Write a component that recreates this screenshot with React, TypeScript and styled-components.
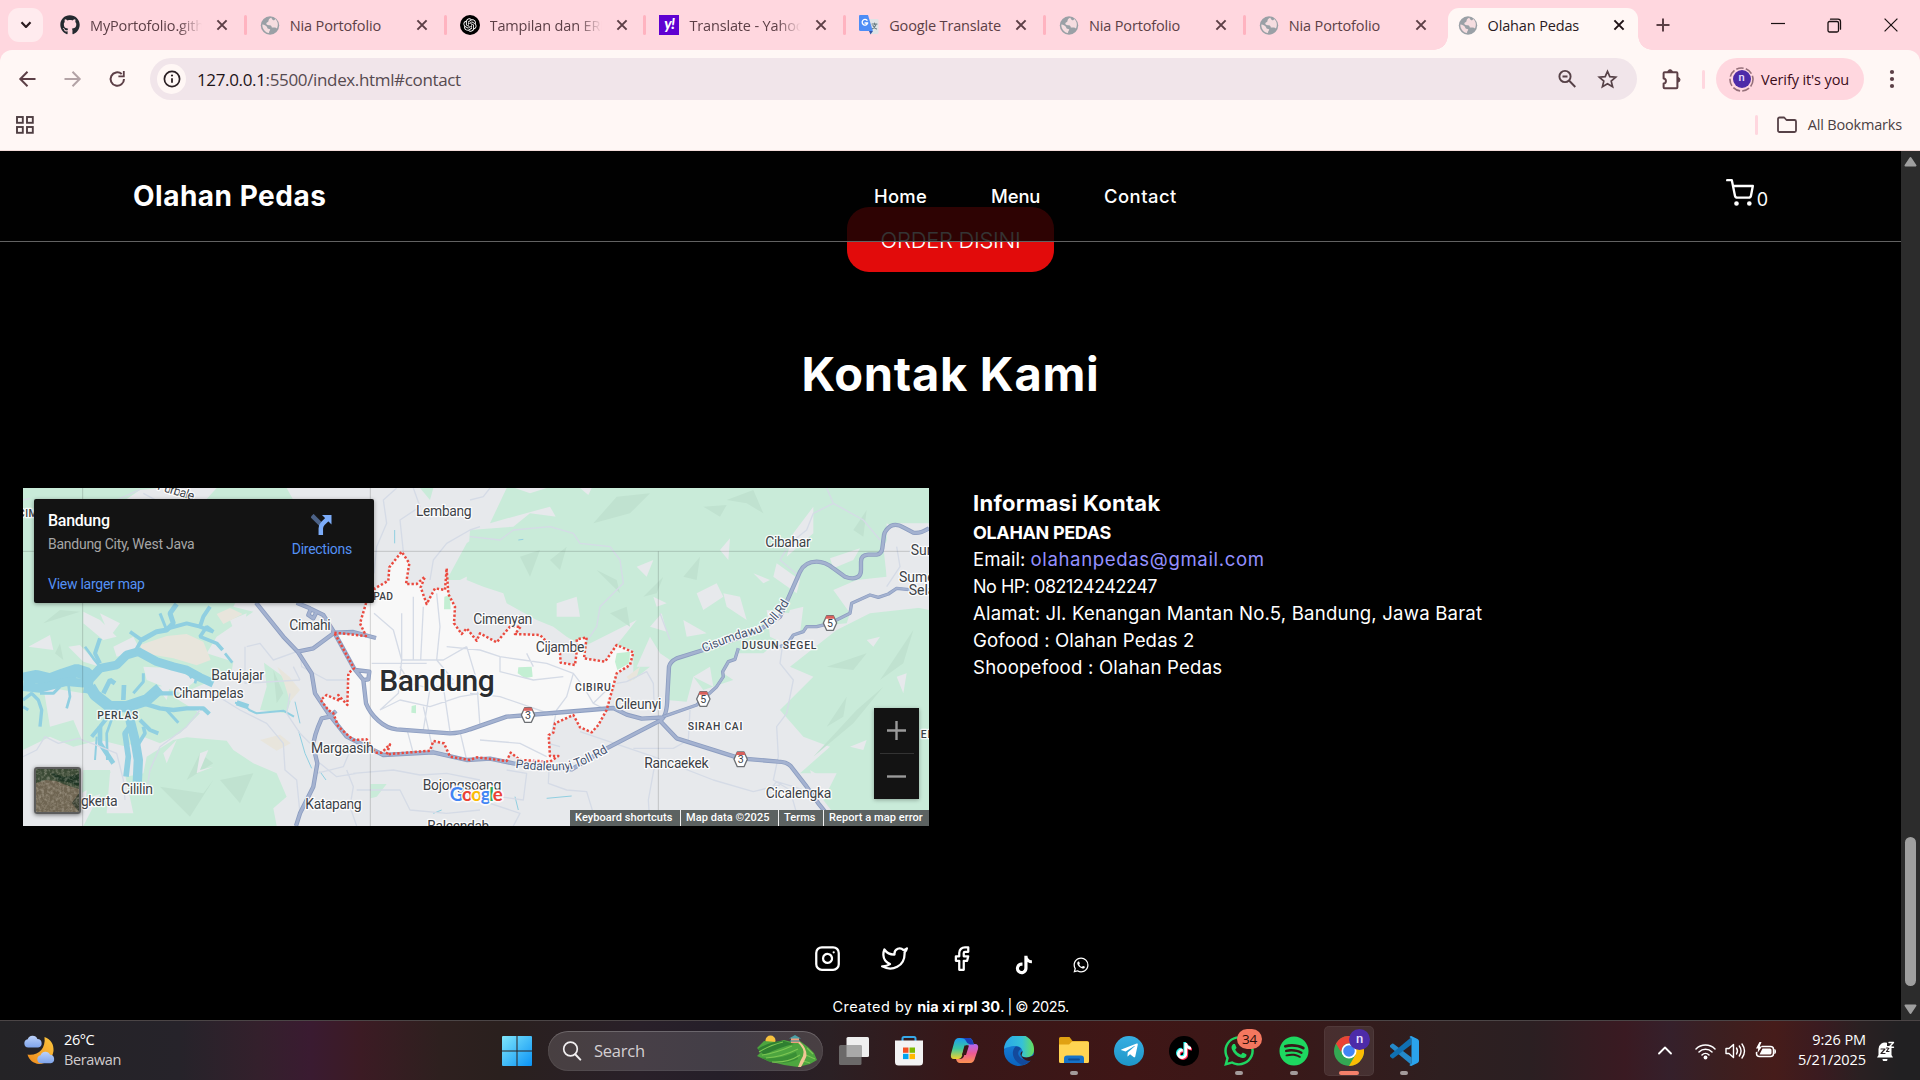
import React from 'react';
import styled, { createGlobalStyle } from 'styled-components';
import { FaGithub, FaSpotify, FaTelegramPlane, FaTiktok, FaWhatsapp } from 'react-icons/fa';
import { RiOpenaiFill } from 'react-icons/ri';
import { BiLogoTiktok, BiLogoWhatsapp } from 'react-icons/bi';

const ui = '"Open Sans", "Noto Sans", sans-serif';
const pop = 'Inter, "Noto Sans", sans-serif';
const map = 'Roboto, "Liberation Sans", sans-serif';

const Global = createGlobalStyle`
  * { box-sizing: border-box; }
  body { margin: 0; background: #000; overflow: hidden; }
  p, h1, h2, h3 { margin: 0; }
  svg { display: block; flex: none; }
`;

const Screen = styled.div`
  width: 1920px;
  height: 1080px;
  display: flex;
  flex-direction: column;
  overflow: hidden;
  background: #000;
`;

/* ---------- browser chrome ---------- */

const TabStrip = styled.div`
  height: 50px;
  flex: none;
  display: flex;
  background: #ffd7df;
  font-family: ${ui};
`;

const TabSearch = styled.div`
  width: 35px;
  height: 34px;
  margin: 8px 4px 0 8px;
  border-radius: 11px;
  background: #ffebee;
  display: flex;
  align-items: center;
  justify-content: center;
`;

const Tab = styled.div<{ $active?: boolean }>`
  position: relative;
  width: ${p => (p.$active ? 190 : 199.8)}px;
  margin: ${p => (p.$active ? '8px 0 0 2px' : '0')};
  padding: ${p => (p.$active ? '0 0 8px 10px' : '0 0 0 13px')};
  height: ${p => (p.$active ? 42 : 50)}px;
  border-radius: 11px 11px 0 0;
  background: ${p => (p.$active ? '#fff7f5' : 'transparent')};
  color: ${p => (p.$active ? '#2a1a1e' : '#5c3f46')};
  display: flex;
  align-items: center;
  &::before, &::after {
    content: '';
    display: ${p => (p.$active ? 'block' : 'none')};
    position: absolute;
    bottom: 0;
    width: 14px;
    height: 14px;
  }
  &::before { left: -14px; background: radial-gradient(circle at 0 0, transparent 13.5px, #fff7f5 14px); }
  &::after { right: -14px; background: radial-gradient(circle at 100% 0, transparent 13.5px, #fff7f5 14px); }
`;

const Favicon = styled.span`
  width: 20px;
  margin-right: 10px;
  display: flex;
  color: #24292f;
`;

const TabTitle = styled.span<{ $fade?: boolean }>`
  width: 112px;
  margin-top: 1px;
  font-size: 14.5px;
  letter-spacing: -0.15px;
  line-height: 22px;
  white-space: nowrap;
  overflow: hidden;
  ${p => p.$fade && 'mask-image: linear-gradient(90deg, #000 88px, transparent 112px);'}
`;

const CloseSlot = styled.span<{ $active?: boolean }>`
  margin-left: ${p => (p.$active ? 13 : 14)}px;
`;

const Separator = styled.i<{ $h: number; $c: string; $ml?: number }>`
  width: 3px;
  height: ${p => p.$h}px;
  margin-left: ${p => p.$ml ?? 0}px;
  border-radius: 2px;
  background: ${p => p.$c};
  flex: none;
`;

const TabSep = styled(Separator)`margin-left: auto;`;

const StripEnd = styled.div`
  flex: 1;
  height: 50px;
  padding: 0 22px 0 18px;
  display: flex;
  align-items: center;
`;

const WindowButtons = styled.div`
  margin-left: auto;
  display: flex;
  align-items: center;
  gap: 42px;
`;

const ToolbarWrap = styled.div`
  height: 101px;
  flex: none;
  background: #ffd7df;
  font-family: ${ui};
`;

const ChromePanel = styled.div`
  height: 101px;
  border-radius: 12px 12px 0 0;
  background: #fff7f5;
  border-bottom: 1px solid #f3dcd9;
`;

const Toolbar = styled.div`
  height: 58px;
  display: flex;
  align-items: center;
  padding: 0 18px;
`;

const NavIcons = styled.div`
  width: 132px;
  display: flex;
  gap: 26px;
  align-items: center;
`;

const Omnibox = styled.div`
  width: 1487px;
  height: 42px;
  border-radius: 21px;
  background: #f1e5ea;
  padding: 0 19px 0 7px;
  display: flex;
  align-items: center;
`;

const InfoDot = styled.div`
  width: 29px;
  height: 30px;
  border-radius: 50%;
  background: #fff7f5;
  display: flex;
  align-items: center;
  justify-content: center;
`;

const Url = styled.span`
  margin-left: 11px;
  font-size: 17px;
  letter-spacing: -0.35px;
  color: #564a50;
  b { font-weight: 400; color: #1d1418; }
`;

const OmniActions = styled.div`
  margin-left: auto;
  display: flex;
  align-items: center;
  gap: 20px;
`;

const ToolbarEnd = styled.div`
  flex: 1;
  display: flex;
  align-items: center;
  padding-left: 22px;
`;

const VerifyPill = styled.div`
  width: 148px;
  height: 42px;
  margin: 0 25px 0 11px;
  border-radius: 21px;
  background: #ffd7df;
  display: flex;
  align-items: center;
  padding-left: 13px;
  gap: 7px;
  font-size: 14.5px;
  letter-spacing: -0.12px;
  color: #3c0c1a;
  white-space: nowrap;
  flex: none;
`;

const Avatar = styled.span`
  width: 25px;
  height: 25px;
  border-radius: 50%;
  display: grid;
  place-items: center;
  > * { grid-area: 1 / 1; }
`;

const Initial = styled.span<{ $size: number }>`
  width: ${p => p.$size}px;
  height: ${p => p.$size}px;
  flex: none;
  border-radius: 50%;
  background: #4d2ba8;
  color: #e9e0ff;
  font: 500 ${p => p.$size * 0.62}px/${p => p.$size - 2}px ${map};
  text-align: center;
`;

const Bookmarks = styled.div`
  height: 33px;
  display: flex;
  align-items: center;
  justify-content: space-between;
  padding: 0 18px 0 16px;
  color: #4b3f43;
  font-size: 14.5px;
  letter-spacing: -0.18px;
`;

const AllBookmarks = styled.div`
  display: flex;
  align-items: center;
  i { margin-right: 19px; }
  span { margin-left: 11px; }
`;

/* ---------- page ---------- */

const Viewport = styled.div`
  height: 869px;
  flex: none;
  display: flex;
  background: #000;
`;

const Page = styled.main`
  width: 1901px;
  height: 869px;
  position: relative;
  color: #fff;
  font-family: ${pop};
  display: flex;
  flex-direction: column;
  align-items: center;
`;

const Navbar = styled.header`
  position: absolute;
  inset: 0 0 auto 0;
  height: 91px;
  padding: 0 133px;
  display: grid;
  grid-template-columns: 741px 1fr auto;
  align-items: center;
  background: rgba(1, 1, 1, 0.8);
  border-bottom: 1px solid #626262;
`;

const Logo = styled.h1`
  font-size: 28px;
  line-height: 40px;
  font-weight: 700;
  letter-spacing: 0.5px;
`;

const NavLinks = styled.nav`
  display: flex;
  font-size: 18.4px;
  font-weight: 500;
`;

const NavLink = styled.a<{ $w: number; $ls: number }>`
  width: ${p => p.$w}px;
  letter-spacing: ${p => p.$ls}px;
`;

const Cart = styled.div`
  display: flex;
  align-items: flex-end;
  gap: 3px;
  padding-bottom: 6px;
  font-size: 18px;
  line-height: 15px;
`;

const OrderButton = styled.a`
  margin-top: 56px;
  width: 207px;
  height: 65px;
  flex: none;
  border-radius: 22px;
  background: #e20b0b;
  font-size: 22px;
  font-weight: 300;
  letter-spacing: -0.3px;
  line-height: 67px;
  text-align: center;
`;

const Heading = styled.h2`
  margin-top: 69px;
  font-size: 47px;
  line-height: 66px;
  letter-spacing: 0.75px;
  font-weight: 700;
`;

const ContactRow = styled.section`
  align-self: stretch;
  margin: 81px 0 0 23px;
  display: flex;
  gap: 44px;
`;

const Info = styled.div`
  font-size: 18.6px;
  line-height: 27px;
  white-space: nowrap;
`;

const InfoTitle = styled.h3`
  font-size: 22px;
  line-height: 31px;
  letter-spacing: 0.28px;
  font-weight: 700;
`;

const InfoLine = styled.p<{ $ls: number; $bold?: boolean }>`
  letter-spacing: ${p => p.$ls}px;
  font-weight: ${p => (p.$bold ? 700 : 400)};
  font-size: ${p => (p.$ls < -0.2 ? 18 : 18.6)}px;
  a { color: #9490ff; letter-spacing: 0.63px; }
`;

const Socials = styled.div`
  margin: 119px 0 0 3px;
  height: 30px;
  display: flex;
  align-items: flex-start;
  svg + svg { margin-left: 40px; }
  svg:nth-child(4) { margin: 9px 0 0 38px; }
  svg:nth-child(5) { margin: 10px 0 0 36px; }
`;

const Credit = styled.p`
  margin-top: 21px;
  font-size: 14.5px;
  line-height: 22px;
  letter-spacing: 0.5px;
  white-space: pre;
  b { letter-spacing: 0.05px; }
  span { letter-spacing: -0.5px; }
`;

const Scrollbar = styled.div`
  width: 19px;
  background: #2c2c2c;
  display: flex;
  flex-direction: column;
  align-items: center;
  padding: 5px 0 5px;
`;

const Thumb = styled.div`
  width: 11px;
  height: 150px;
  margin: 670px 0 18px;
  border-radius: 6px;
  background: #9f9f9f;
`;

/* ---------- embedded map ---------- */

const MapFrame = styled.div`
  position: relative;
  width: 906px;
  height: 338px;
  flex: none;
  overflow: hidden;
  background: #e7e9ec;
  font-family: ${map};
`;

const PlaceCard = styled.div`
  position: absolute;
  left: 11px;
  top: 11px;
  width: 340px;
  height: 104px;
  border-radius: 2px;
  background: #131313;
  box-shadow: 0 1px 4px rgba(0, 0, 0, 0.35);
  padding: 12px 22px 0 14px;
  display: flex;
  justify-content: space-between;
  font-size: 14px;
  letter-spacing: -0.26px;
  color: #a6a6a6;
`;

const PlaceName = styled.p`
  color: #fff;
  font-size: 16px;
  font-weight: 500;
  line-height: 20px;
`;

const PlaceLine = styled.p<{ $link?: boolean }>`
  line-height: 16px;
  margin-top: ${p => (p.$link ? 24 : 5)}px;
  ${p => p.$link && 'color: #5491f5;'}
`;

const Directions = styled.div`
  display: flex;
  flex-direction: column;
  align-items: center;
  gap: 6px;
  padding-top: 3px;
  color: #5491f5;
  line-height: 17px;
`;

const Zoomer = styled.div`
  position: absolute;
  right: 10px;
  top: 220px;
  width: 45px;
  height: 91px;
  background: #131313;
  box-shadow: 0 1px 4px rgba(0, 0, 0, 0.3);
  display: flex;
  flex-direction: column;
  align-items: center;
`;

const ZoomKey = styled.div`
  width: 34px;
  height: 45px;
  display: flex;
  align-items: center;
  justify-content: center;
  & + & { border-top: 1px solid #333; }
`;

const Satellite = styled.div`
  position: absolute;
  left: 11px;
  top: 279px;
  width: 47px;
  height: 47px;
  border: 2px solid #5c5c5c;
  border-radius: 3px;
  overflow: hidden;
  box-shadow: 0 1px 4px rgba(0, 0, 0, 0.5);
`;

const Attribution = styled.div`
  position: absolute;
  right: 0;
  bottom: 0;
  height: 16px;
  display: flex;
  gap: 1px;
  font-size: 11px;
  font-weight: 500;
  letter-spacing: 0.07px;
  line-height: 16px;
  color: #fff;
  background: #f0f0f0;
`;

const Credits = styled.span<{ $w: number }>`
  width: ${p => p.$w}px;
  padding-left: 5px;
  white-space: nowrap;
  background: #5c6261;
`;

/* ---------- taskbar ---------- */

const Taskbar = styled.footer`
  height: 60px;
  flex: none;
  border-top: 1px solid #4b4546;
  display: flex;
  align-items: center;
  font-family: ${ui};
  color: #fff;
  background: linear-gradient(90deg, #242326 0, #26232a 180px, #34202c 260px, #3a1b31 310px, #3c1b24 360px,
    #2e201f 440px, #2a201e 500px, #292029 640px, #251f29 720px, #2b2024 830px, #381718 960px, #3f1616 1130px,
    #3a1818 1270px, #2e1f20 1440px, #2b1f22 1530px, #3a1a22 1625px, #35202b 1670px, #3c1f20 1720px, #461c1a 1775px,
    #3a1b20 1820px, #2a2022 1860px, #212022 1900px);
`;

const Weather = styled.div`
  width: 502px;
  padding-left: 24px;
  display: flex;
  align-items: center;
  gap: 8px;
  font-size: 14.5px;
  line-height: 20px;
  letter-spacing: -0.4px;
  margin-top: -2px;
  p + p { color: #cfcbcc; }
`;

const SearchPill = styled.div`
  width: 275px;
  height: 40px;
  margin: 0 16px;
  border-radius: 20px;
  background: rgba(255, 255, 255, 0.14);
  box-shadow: inset 0 1px 0 rgba(255, 255, 255, 0.16), inset 0 0 0 1px rgba(255, 255, 255, 0.06);
  display: flex;
  align-items: center;
  padding: 0 5px 0 14px;
  color: #d4cfd2;
  font-size: 16.5px;
  letter-spacing: -0.25px;
  span { margin: 0 auto 0 12px; }
`;

const Apps = styled.div`
  display: flex;
  gap: 5px;
  margin-left: -10px;
`;

const AppButton = styled.div<{ $active?: boolean }>`
  position: relative;
  width: 50px;
  height: 50px;
  border-radius: 5px;
  display: flex;
  align-items: center;
  justify-content: center;
  background: ${p => (p.$active ? 'rgba(255,255,255,0.09)' : 'transparent')};
  box-shadow: ${p => (p.$active ? 'inset 0 0 0 1px rgba(255,255,255,0.05)' : 'none')};
`;

const Running = styled.i<{ $active?: boolean }>`
  position: absolute;
  bottom: 1px;
  left: 50%;
  transform: translateX(-50%);
  width: ${p => (p.$active ? 20 : 8)}px;
  height: 4px;
  border-radius: 2px;
  background: ${p => (p.$active ? '#f4806a' : '#a39b9b')};
`;

const Badge = styled.span`
  position: absolute;
  left: 23px;
  top: 3px;
  width: 25px;
  height: 20px;
  border-radius: 10px;
  background: #f4775f;
  color: #2a0d08;
  font-size: 13.5px;
  line-height: 20px;
  text-align: center;
  letter-spacing: -0.3px;
`;

const ChromeBadge = styled.span`
  position: absolute;
  left: 25px;
  top: 3px;
  display: flex;
`;

const Disc = styled.span<{ $bg: string; $size?: number }>`
  width: ${p => p.$size ?? 30}px;
  height: ${p => p.$size ?? 30}px;
  border-radius: 50%;
  background: ${p => p.$bg};
  display: flex;
  align-items: center;
  justify-content: center;
`;

const Tray = styled.div`
  margin-left: auto;
  padding-right: 24px;
  display: flex;
  align-items: center;
`;

const TrayIcons = styled.div`
  display: flex;
  align-items: center;
  gap: 9px;
  margin-left: 23px;
`;

const Clock = styled.div`
  width: 90px;
  margin: -2px 10px 0 0;
  text-align: right;
  font-size: 14.5px;
  line-height: 20px;
  letter-spacing: -0.08px;
`;

/* ---------- small drawings ---------- */

const stroke = (c: string, w = 2) => ({
  fill: 'none', stroke: c, strokeWidth: w, strokeLinecap: 'round' as const, strokeLinejoin: 'round' as const,
});

const CloseX = ({ c = '#5c3f46' }: { c?: string }) => (
  <svg width="12" height="12" viewBox="0 0 12 12"><path d="M1.4 1.4 10.6 10.6M10.6 1.4 1.4 10.6" stroke={c} strokeWidth="2" /></svg>
);

const Globe = () => (
  <svg width="20" height="19" viewBox="-.5 0 20 19">
    <circle cx="9.5" cy="9.5" r="9.2" fill="#9aa0a6" />
    <path d="M10.8 1.8c-1.6.6-2.9 1.8-2.8 3.2 0 1.3-2.2 1.1-2.2 2.6 0 1.3 1.2 1.6 2.6 1.6 1.8 0 2.9.6 2.9 2.2h2.8c1 0 1.8.4 2.3 1.1 1.8-3.3 1-7.3-1.7-9.4-.5 1.300-1.600 1.500-2.400 1-.7-.5-1-1.300-1.500-2.300zM1.800 8.600c2 .1 4.700 1.600 5 3.200.2 1 1.600 1.400 2.900 1.500-.1 1.500-1.200 1.900-1.200 3.800-3.700-.4-6.800-3.900-6.700-8.500z" fill="#f5dde0" />
  </svg>
);

const Yahoo = styled.span`
  width: 20px;
  height: 20px;
  background: #5f01d1;
  color: #fff;
  font: italic 900 15px/17px Lato, sans-serif;
  text-align: center;
  letter-spacing: -0.5px;
`;

const TranslateIcon = () => (
  <svg width="20" height="20" viewBox="0 0 20 20">
    <path d="M8 4h10.500a1 1 0 0 1 1 1v13a1 1 0 0 1-1 1h-7z" fill="#dfe3e6" />
    <path d="M13 9h5M15.500 8v1.500M17 9.500c-.6 2-2 3.500-4 4.500M14 10.500c.6 1.500 2 2.800 3.500 3.500" {...stroke('#6b7f86', 1.1)} />
    <path d="M10 16h4l-2.500 3.500z" fill="#3454a6" />
    <path d="M1 0h8l4.800 16H1.500A1.500 1.500 0 0 1 0 14.500V1a1 1 0 0 1 1-1z" fill="#4d8df6" />
    <path d="M8 5.300A2.800 2.800 0 1 0 8.700 8H6" {...stroke('#fff', 1.3)} />
  </svg>
);

type TabData = { title: string; icon: React.ReactNode; fade?: boolean };
const tabs: TabData[] = [
  { title: 'MyPortofolio.github', icon: <FaGithub size={20} />, fade: true },
  { title: 'Nia Portofolio', icon: <Globe /> },
  { title: 'Tampilan dan ERD', icon: <Disc $bg="#000" $size={20}><RiOpenaiFill size={16} color="#fff" /></Disc>, fade: true },
  { title: 'Translate - Yahoo', icon: <Yahoo>y!</Yahoo>, fade: true },
  { title: 'Google Translate', icon: <TranslateIcon /> },
  { title: 'Nia Portofolio', icon: <Globe /> },
  { title: 'Nia Portofolio', icon: <Globe /> },
];

const Chrome = () => (
  <>
    <TabStrip>
      <TabSearch><svg width="12" height="8" viewBox="0 0 12 8"><path d="M1.500 1.300 6 5.900l4.500-4.600" {...stroke('#2b1b1f', 2.2)} strokeLinecap="butt" /></svg></TabSearch>
      {tabs.map((t, i) => (
        <Tab key={i}>
          <Favicon>{t.icon}</Favicon>
          <TabTitle $fade={t.fade}>{t.title}</TabTitle>
          <CloseSlot><CloseX /></CloseSlot>
          {i < 6 && <TabSep $h={20} $c="#ffb3c0" />}
        </Tab>
      ))}
      <Tab $active>
        <Favicon><Globe /></Favicon>
        <TabTitle>Olahan Pedas</TabTitle>
        <CloseSlot $active><CloseX c="#1f1216" /></CloseSlot>
      </Tab>
      <StripEnd>
        <svg width="14" height="14" viewBox="0 0 14 14"><path d="M7 .5v13M.5 7h13" stroke="#5c3f46" strokeWidth="2" /></svg>
        <WindowButtons>
          <svg width="14" height="14" viewBox="0 0 14 14"><path d="M0 5.500h14" stroke="#1a1012" strokeWidth="1.2" /></svg>
          <svg width="15" height="15" viewBox="0 0 15 15"><rect x="1" y="3.500" width="10.500" height="10.500" rx="1.500" {...stroke('#1a1012', 1.3)} /><path d="M3.500 1.200h7.500a2.500 2.500 0 0 1 2.500 2.500v7.500" {...stroke('#1a1012', 1.3)} /></svg>
          <svg width="14" height="14" viewBox="0 0 14 14"><path d="M.6.6 13.400 13.400M13.400.6.6 13.400" stroke="#1a1012" strokeWidth="1.2" /></svg>
        </WindowButtons>
      </StripEnd>
    </TabStrip>
    <ToolbarWrap>
      <ChromePanel>
        <Toolbar>
          <NavIcons>
            <svg width="19" height="18" viewBox="0 0 19 18"><path d="M17.500 9H3M9.500 1.800 2.300 9l7.200 7.200" {...stroke('#5c3f46')} strokeLinecap="butt" strokeLinejoin="miter" /></svg>
            <svg width="19" height="18" viewBox="0 0 19 18"><path d="M1.500 9H16M9.500 1.800 16.700 9l-7.200 7.200" {...stroke('#b3a3a6')} strokeLinecap="butt" strokeLinejoin="miter" /></svg>
            <svg width="19" height="18" viewBox="0 0 19 18"><path d="M16 9a6.700 6.700 0 1 1-2.300-5" {...stroke('#5c3f46')} strokeLinecap="butt" /><path d="M16.700 1v6.300h-6.300v-1.800h4.500V1z" fill="#5c3f46" /></svg>
          </NavIcons>
          <Omnibox>
            <InfoDot><svg width="18" height="18" viewBox="0 0 18 18"><circle cx="9" cy="9" r="7.600" {...stroke('#2b1f23', 1.7)} /><path d="M9 8.200v4.600" stroke="#2b1f23" strokeWidth="1.8" /><circle cx="9" cy="5.500" r="1.100" fill="#2b1f23" /></svg></InfoDot>
            <Url><b>127.0.0.1</b>:5500/index.html#contact</Url>
            <OmniActions>
              <svg width="20" height="20" viewBox="0 0 20 20"><circle cx="8" cy="7.500" r="5.600" {...stroke('#564147', 1.9)} /><path d="M12 11.500 18.300 18M5.500 7.500h5" stroke="#564147" strokeWidth="1.9" /></svg>
              <svg width="21" height="20" viewBox="0 0 21 20"><path d="m10.500 2.300 2.300 5.400 5.900.5-4.500 3.900 1.400 5.700-5.100-3.100-5.100 3.100 1.400-5.700-4.500-3.900 5.900-.5z" {...stroke('#564147', 1.7)} strokeLinejoin="miter" /></svg>
            </OmniActions>
          </Omnibox>
          <ToolbarEnd>
            <svg width="24" height="24" viewBox="0 0 24 24"><path d="M4.600 6.300a1 1 0 0 1 1-1h11.800a1 1 0 0 1 1 1v14a1 1 0 0 1-1 1H5.600a1 1 0 0 1-1-1v-3.800c3 0 3.200-5 0-5z" {...stroke('#5c3f46')} /><path d="M8.800 5a2.300 2.300 0 0 1 4.600 0zM18.700 10.500a2.300 2.300 0 0 1 0 4.600z" fill="#5c3f46" stroke="#5c3f46" /></svg>
            <Separator $h={19} $c="#ffd7df" $ml={19} />
            <VerifyPill>
              <Avatar>
                <svg width="25" height="25" viewBox="0 0 25 25"><circle cx="12.500" cy="12.500" r="11.500" fill="none" stroke="#96707a" strokeWidth="1.600" strokeDasharray="7.500 2.200" /></svg>
                <Initial $size={18}>n</Initial>
              </Avatar>
              Verify it's you
            </VerifyPill>
            <svg width="6" height="20" viewBox="0 0 6 20"><g fill="#5c3f46"><circle cx="3" cy="3" r="2.100" /><circle cx="3" cy="10" r="2.100" /><circle cx="3" cy="17" r="2.100" /></g></svg>
          </ToolbarEnd>
        </Toolbar>
        <Bookmarks>
          <svg width="18" height="18" viewBox="0 0 18 18"><g fill="none" stroke="#4f3e42" strokeWidth="1.9"><rect x="1" y="1" width="5.800" height="5.800" /><rect x="11" y="1" width="5.800" height="5.800" /><rect x="1" y="11" width="5.800" height="5.800" /><rect x="11" y="11" width="5.800" height="5.800" /></g></svg>
          <AllBookmarks>
            <Separator $h={20} $c="#ffd7df" />
            <svg width="20" height="17" viewBox="0 0 20 17"><path d="M1 3a1.500 1.500 0 0 1 1.500-1.500h4.700l2.300 2.500h8A1.500 1.500 0 0 1 19 5.500v9a1.500 1.500 0 0 1-1.500 1.500h-15A1.500 1.500 0 0 1 1 14.500z" {...stroke('#564147', 1.8)} /></svg>
            <span>All Bookmarks</span>
          </AllBookmarks>
        </Bookmarks>
      </ChromePanel>
    </ToolbarWrap>
  </>
);

/* ---------- map drawing ---------- */

const GREEN = [
  'M69 24H480L420 30 380 57H620L650 24H860L880 60 740 300 700 380 760 395 650 470 620 520 700 545 690 600 640 600 520 650 600 700 540 760 480 790 430 770 380 800 300 780 220 800 150 770 69 810z',
  'M520 780 560 772 680 782 700 810 760 850 830 880 860 950 820 985 830 1038H250L290 960 330 900 430 880 440 830z',
  'M250 870 330 870 340 930 245 960z',
  'M792 548 850 590 880 640 860 700 780 690 800 620z',
  'M1340 300 1400 190 1440 160 1440 270 1380 300z',
  'M1112 912 1160 912 1130 950 1112 955z',
  'M1260 24H1300L1290 60z',
  'M1520 24H2787V130L2690 130 2650 200 2660 290 2570 300 2500 330 2550 400 2540 430 2430 440 2400 460 2410 380 2370 390 2340 480 2290 520 2210 520 2170 580 2200 600 2110 630 2080 590 2060 665 2000 660 2010 540 1980 520 1950 470 1910 560 1950 560 1900 600 1900 510 1850 495 1910 420 1750 500 1700 470 1660 440 1610 420 1520 370 1510 340 1450 320 1400 300 1410 150 1540 140 1590 100 1670 110 1690 150 1650 80 1540 110 1470 130z',
  'M2340 690 2440 590 2370 560 2510 450 2610 400 2787 380V1038H2530L2470 960 2510 880 2400 880 2490 800 2410 770 2340 690z',
];
const GREY = [
  'M85 500 150 465 160 510z', 'M250 395 300 420 350 470 310 480 250 430z', 'M300 400 360 430 330 470z', 'M205 500 240 495 300 560 250 545z',
  'M430 560 520 565 590 600 540 640 440 600z', 'M340 500 400 470 420 510 350 530z', 'M130 620 250 640 250 790 220 720 150 740z', 'M470 620 510 615 500 660z',
  'M600 820 625 810 600 870 640 860 590 880z', 'M330 880 370 860 400 1000 320 1000z', 'M210 960 260 930 250 1030 180 1030z', 'M850 600 870 560 890 640z',
  'M690 420 740 400 720 500z', 'M490 820 530 780 500 850z', 'M1740 24 1775 24 1765 45z', 'M2160 210 2190 175 2185 240z', 'M2050 420 2120 460 2060 470z',
  'M2090 340 2150 310 2170 350 2110 390z', 'M2170 340 2220 350 2240 420 2180 380z', 'M1950 440 1985 400 2000 455z', 'M1960 350 2000 370 1970 380z', 'M2260 280 2310 300 2290 310z',
  'M2490 235 2580 205 2560 240 2500 265z', 'M2440 80 2440 160 2360 230 2380 160z', 'M1670 370 1730 350 1740 410 1670 410z', 'M1910 260 1960 240 1940 290z',
  'M2550 800 2600 780 2590 810z', 'M2430 870 2480 900 2450 940z', 'M2300 390 2370 400 2350 490 2310 470z', 'M2600 480 2640 470 2620 500z', 'M2700 300 2787 290 2787 390 2690 370z',
  'M2690 590 2720 580 2710 640z', 'M2080 590 2130 560 2140 620z', 'M2330 250 2400 300 2390 340 2320 290z', 'M1545 24 1640 24 1590 40z', 'M2660 130 2720 165 2787 160V290L2660 330z',
];
const SHADE = [
  'M180 390 240 395 130 430z', 'M180 490 190 540 165 520z', 'M600 820 640 850 560 900z', 'M480 920 610 940 640 900 570 1010z', 'M660 900 760 880 720 970z', 'M820 570 850 640 830 670z',
  'M1780 130 1850 50 1950 40 1890 100z', 'M2180 60 2260 30 2290 100 2240 70z', 'M1650 240 1700 200 1680 270z', 'M1790 270 1850 300 1860 340z', 'M1830 400 1880 380 1890 440z', 'M1930 350 1990 290 1970 340z',
  'M2440 830 2570 690 2650 620 2560 730z', 'M2640 600 2740 450 2710 550z', 'M2480 560 2600 520 2560 570z', 'M2560 150 2600 90 2590 170z', 'M2480 740 2540 650 2530 710z', 'M2110 80 2180 75 2160 110z', 'M1560 230 1620 210 1590 290z', 'M2050 290 2100 230 2090 300z',
];
const BEIGE = [
  'M420 495 500 468 560 462 610 485 632 540 590 556 520 535 430 520z', 'M650 402 690 384 728 402 670 432z', 'M832 560 868 590 900 630 870 665 850 600z',
  'M780 780 840 764 872 790 830 812z', 'M1880 590 1920 560 1910 590 1890 605z', 'M1365 545 1385 530 1380 556z',
];
const WATER: [string, number][] = [
  ['M69 598 110 590 150 600 190 585 230 572 262 582 270 600', 40], ['M69 620 120 625 200 605 260 610', 26],
  ['M262 640 268 600 300 565 350 555 380 525 415 515 470 545 520 560 560 570 600 592 640 610', 26],
  ['M300 550 285 520 300 475', 12], ['M300 560 280 535 255 500', 8], ['M405 515 425 480 390 455', 11], ['M425 480 470 455 500 450 520 430 510 400 530 372', 15], ['M500 450 480 400', 9],
  ['M505 445 560 430 600 440 610 410 630 380', 12], ['M600 440 640 455 620 440 600 470 650 490 668 510', 11], ['M675 520 697 548', 8],
  ['M270 620 285 645 330 680 380 680 440 660 480 625', 34], ['M310 640 330 600 345 610', 14], ['M370 660 372 615', 14], ['M400 640 430 605 430 580', 9], ['M440 660 470 640 530 640', 13],
  ['M430 670 480 685 520 690 560 685 610 685 628 702', 13], ['M500 690 535 728', 9], ['M385 680 390 740 375 760 385 830 378 890', 17], ['M390 720 405 780 415 840 412 905', 28],
  ['M410 800 435 760 430 740', 11], ['M420 720 450 750 475 760', 12], ['M340 690 300 740 275 770', 12], ['M300 740 300 790 340 850', 14], ['M345 690 320 760 322 840', 8], ['M290 770 285 840', 6],
  ['M69 660 95 640 115 660 125 690 120 740', 10], ['M120 640 160 640 180 620', 9], ['M205 610 210 650 200 685', 8], ['M69 680 85 690', 9],
  ['M590 590 585 610M560 572 575 595', 8], ['M705 668 730 672 748 690 770 700 850 692 882 710', 6], ['M710 668 745 680', 16],
  ['M885 665 900 730M895 750 915 820 935 865M960 875 978 900', 3], ['M1184 150V190', 3], ['M1300 1000 1325 990M1545 950 1555 990M1595 610 1588 640 1600 660M1640 955 1715 948M1555 180 1570 178', 3],
];
const MINOR = [
  'M350 60 420 28M380 57 290 90M430 40 560 110', 'M1122 280 1130 200 1160 130 1150 60 1190 24', 'M1210 215 1200 120 1260 80 1240 24', 'M1290 300 1300 240 1340 190 1410 150 1440 140',
  'M735 500V610L900 600M740 500 780 490 820 540 890 515', 'M900 515 905 560 980 600 1045 600', 'M900 600 880 560M870 640 860 700 900 760 930 790', 'M640 640 720 690 800 730 850 790 855 870 890 900 900 1000',
  'M69 830 110 810 135 770 175 790 235 775 300 800 350 820 370 900 375 960', 'M600 690 560 740 480 800 450 870 440 930', 'M1122 400 1180 450 1205 540 1195 640 1140 690', 'M1205 400V540H1330L1400 500M1240 350V540M1270 380 1262 540M1310 340 1320 440 1310 540 1360 600',
  'M1115 550H1280M1200 560 1230 610 1290 625 1360 610M1140 690 1200 660 1290 680 1380 650 1440 640', 'M1290 625 1270 750M1330 620 1350 755M1400 500 1430 600 1440 740', 'M1220 745 1240 820M1270 680 1300 815M1380 755 1400 840',
  'M1060 880 1180 870 1260 885 1340 880 1440 900', 'M1040 870 1060 920 1050 980 1070 1038M1070 930H1200L1230 990 1340 1000 1440 990', 'M950 880 1030 860 1060 790M960 850 1010 890 1070 880',
  'M1340 500 1440 510 1500 530 1570 540 1640 550 1720 580 1750 620 1780 670 1820 690', 'M1500 530V575L1600 600 1690 590M1720 580 1700 650 1670 690 1655 760', 'M1410 640 1500 650 1660 705M1780 670 1830 620', 'M1440 780 1560 790 1640 830M1600 560 1580 520',
  'M1410 170 1500 180 1540 150 1650 140 1720 160 1740 190 1830 200 1860 240 1870 310 1800 380 1790 440 1750 500', 'M1850 610 1880 605 1940 575 1960 610 1963 690', 'M1740 755 1960 830 2140 900 2260 935 2340 915', 'M1965 850 1945 960 1950 1038M2070 690 2065 780 2020 805 1900 805',
  'M2350 480 2340 550 2380 600 2360 700 2330 740 2335 830 2320 900 2370 930 2390 1000', 'M2480 24 2500 70 2440 100 2420 150 2370 190 2340 240 2400 290 2370 340', 'M2500 70 2590 120 2640 180M2690 200 2700 260 2660 320', 'M2300 940 2330 905 2380 920 2440 940',
  'M1648 850 1645 910 1700 930 1760 935 1780 1000M1645 790 1680 800', 'M1520 870 1580 880 1570 960 1500 950', 'M1540 1038 1560 1000 1440 960', 'M1980 400 2010 480', 'M69 60 90 55M1410 60 1450 50 1470 24',
];
const TOLL = [
  'M768 368 850 470 893 515 935 580 945 640 985 700 1040 770 1150 825 1300 817 1400 840 1470 836 1540 850 1715 868 1820 805 1980 722Q2002 710 2002 650L2007 560Q2010 545 2030 535L2110 510 2270 455 2340 410 2358 370 2400 275Q2415 245 2450 245 2475 245 2500 265L2535 290Q2560 300 2575 290 2583 284 2583 270V245Q2583 225 2605 224H2630Q2645 222 2647 205L2652 165Q2655 150 2672 138 2690 130 2710 142L2740 158Q2760 162 2787 145',
  'M893 515 940 505 1003 458 1060 456 1128 474', 'M890 368 930 385 970 405 1003 458 1062 565 1090 600 1098 670Q1110 700 1135 722 1160 745 1190 748L1350 760Q1380 760 1410 748L1520 710 1585 705 1840 684 1880 704 1925 716 1990 712',
  'M1008 693 990 710 965 715Q940 770 940 800L952 850 940 920 900 1000 888 1038', 'M1980 722 2030 775 2220 835 2335 845Q2360 846 2372 858L2420 920 2455 970 2510 1038', 'M1090 600 1105 598 1108 575 1065 570', 'M925 405 932 388 950 395 940 415z',
];
const ROUTE5 = 'M1990 710 2090 675 2150 620 2170 590 2168 575 2185 545 2205 538 2215 505M2340 500 2362 492 2380 465 2410 455 2420 440 2450 440 2490 430 2550 400 2555 370 2610 345 2635 352 2665 342 2690 325 2787 335';
const CITY = 'M1003 458 1098 468 1080 430 1098 370 1125 325 1165 302 1168 262 1205 215 1228 250 1218 312 1250 312 1275 290 1262 322 1280 372 1305 325 1335 330 1340 265 1345 342 1365 380 1362 430 1385 462 1400 445 1430 482 1440 460 1490 487 1530 440 1562 440 1545 462 1620 465 1640 485 1680 520 1682 548 1725 555 1732 500 1730 478 1760 472 1752 535 1815 545 1850 495 1900 517 1890 555 1850 580 1838 625 1820 690 1795 735 1775 757 1740 742 1720 705 1665 730 1660 758 1646 765 1650 828 1675 828 1650 845 1560 840 1532 818 1520 843 1430 832 1410 840 1350 830 1332 790 1300 783 1290 812 1160 823 1170 793 1145 818 1125 818 1100 778 1060 780 1015 740 1000 700 985 690 962 660 980 645 1020 663 1015 645 1042 675 1045 580 1062 565z';

type Label = { t: string; x: number; y: number; w?: number; s?: number; caps?: boolean; rot?: number };
const LABELS: Label[] = [
  { t: 'Lembang', x: 1248, y: 108, w: 167 }, { t: 'Cimahi', x: 868, y: 451, w: 124 }, { t: 'Batujajar', x: 634, y: 601, w: 158 }, { t: 'Cihampelas', x: 520, y: 654, w: 211 },
  { t: 'PERLAS', x: 292, y: 718, w: 126, caps: true }, { t: 'Margaasih', x: 933, y: 818, w: 188 }, { t: 'Cililin', x: 363, y: 942, w: 96 }, { t: 'gkerta', x: 243, y: 979, w: 110 },
  { t: 'Katapang', x: 916, y: 987, w: 169 }, { t: 'Bojongsoang', x: 1268, y: 930, w: 236 }, { t: 'Baleendah', x: 1282, y: 1052, w: 186 }, { t: 'PAD', x: 1120, y: 360, w: 62, caps: true },
  { t: 'CIM', x: 54, y: 112, w: 62, caps: true }, { t: 'Purbale', x: 470, y: 28, w: 114, s: 38, rot: 17 },
  { t: 'Cimenyan', x: 1420, y: 432, w: 177 }, { t: 'Cijambe', x: 1607, y: 517, w: 146 }, { t: 'CIBIRU', x: 1725, y: 634, w: 110, caps: true }, { t: 'Cileunyi', x: 1845, y: 686, w: 139 },
  { t: 'SIRAH CAI', x: 2063, y: 750, w: 167, caps: true }, { t: 'Rancaekek', x: 1933, y: 864, w: 193 }, { t: 'Cicalengka', x: 2297, y: 955, w: 197 }, { t: 'DUSUN SEGEL', x: 2225, y: 508, w: 227, caps: true },
  { t: 'Cibahar', x: 2296, y: 200, w: 136 }, { t: 'Sume', x: 2697, y: 307 }, { t: 'Sela', x: 2726, y: 346 }, { t: 'Sum', x: 2732, y: 224 }, { t: 'EI', x: 2762, y: 773, caps: true },
];
const SHIELDS: [number, number, string][] = [[1584, 705, '3'], [2110, 657, '5'], [2222, 838, '3'], [2490, 429, '5']];

const MapArt = () => (
  <svg width="906" height="338" viewBox="69 24 2718 1014" fontFamily="Roboto, sans-serif" fill="#3d4247">
    <rect x="69" y="24" width="2718" height="1014" fill="#e7e9ec" />
    <path d={GREEN.join('')} fill="#c9ebd9" />
    <path d={SHADE.join('')} fill="#c0e2d0" />
    <path d={GREY.join('')} fill="#e7e9ec" />
    <path d={BEIGE.join('')} fill="#e8e5dc" />
    <g fill="none" stroke="#90cfe1" strokeLinejoin="bevel">
      {WATER.map(([d, w], i) => <path key={i} d={d} strokeWidth={w} />)}
    </g>
    <path d={CITY} fill="#f8f8f8" />
    <path d="M1333 350 1350 345 1352 388 1332 388zM1235 678 1248 675 1248 700 1234 698zM1555 562 1595 560 1598 590 1575 595 1553 580zM1850 520 1890 515 1888 550 1852 570 1845 545z" fill="#c3efd3" />
    <path d={MINOR.join('')} fill="none" stroke="#d5dbe6" strokeWidth="4" strokeLinejoin="round" />
    <g stroke="#000" strokeOpacity=".16" strokeWidth="3"><path d="M69 214H2787M248 24V1038M1111 24V1038M1975 214V1038" /></g>
    <g fill="none" strokeLinejoin="round">
      <path d={TOLL.join('')} stroke="#8c9dc0" strokeWidth="13" />
      <path d={TOLL.join('')} stroke="#a4b2d0" strokeWidth="8" />
      <path d={ROUTE5} stroke="#8c9dc0" strokeWidth="10" />
      <path d={ROUTE5} stroke="#a4b2d0" strokeWidth="6" />
      <path d={CITY} stroke="#ea4a3f" strokeWidth="7.5" strokeDasharray="7 6" />
    </g>
    {SHIELDS.map(([x, y, n]) => (
      <g key={x} transform={`translate(${x} ${y})`}>
        <path d="M-10-22H10L20 0 10 22H-10L-20 0z" fill="#fff" stroke="#6c6f73" strokeWidth="4" strokeLinejoin="round" />
        <path d="M-11-22H11L14-13H-14z" fill="#d9605c" />
        <text y="12" fontSize="32" textAnchor="middle">{n}</text>
      </g>
    ))}
    <g stroke="#fff" strokeWidth="8" strokeLinejoin="round" strokeOpacity=".85" paintOrder="stroke">
      {LABELS.map((l, i) => (
        <text key={i} x={l.x} y={l.y} transform={l.rot ? `rotate(${l.rot} ${l.x} ${l.y})` : undefined} textLength={l.w} fontSize={l.caps ? 31 : l.s ?? 42} fontWeight={l.caps ? 500 : 400} letterSpacing={l.caps ? 3 : undefined}>{l.t}</text>
      ))}
      <g fill="#46536f" fontSize="37" letterSpacing="-.6">
        <path id="cisumdawu" d="M2112 518Q2200 478 2270 462 2325 440 2365 372" fill="none" stroke="none" />
        <text><textPath href="#cisumdawu">Cisumdawu Toll Rd</textPath></text>
        <path id="padaleunyi" d="M1546 864Q1650 876 1712 868 1770 850 1830 812" fill="none" stroke="none" />
        <text><textPath href="#padaleunyi">Padaleunyi Toll Rd</textPath></text>
      </g>
      <text x="1138" y="632" fontSize="90" fontWeight="500" fill="#2a2d30" textLength="346">Bandung</text>
      <text x="1349" y="964" fontFamily="Lato, sans-serif" fontWeight="700" fontSize="56" textLength="159" strokeWidth="10">
        <tspan fill="#4285f4">G</tspan><tspan fill="#ea4335">o</tspan><tspan fill="#fbbc04">o</tspan><tspan fill="#4285f4">g</tspan><tspan fill="#34a853">l</tspan><tspan fill="#ea4335">e</tspan>
      </text>
    </g>
  </svg>
);

const EmbeddedMap = () => (
  <MapFrame>
    <MapArt />
    <PlaceCard>
      <div>
        <PlaceName>Bandung</PlaceName>
        <PlaceLine>Bandung City, West Java</PlaceLine>
        <PlaceLine $link>View larger map</PlaceLine>
      </div>
      <Directions>
        <svg width="21" height="21" viewBox="0 0 21 21"><path d="M1 1.500 10 10.500" stroke="#4c6287" strokeWidth="4.5" /><path d="M9.800 21V14.500Q9.800 11.500 12 9.300L16.500 5" stroke="#7cacf8" strokeWidth="4.5" fill="none" /><path d="M11 1h9.500v9.500z" fill="#7cacf8" /></svg>
        Directions
      </Directions>
    </PlaceCard>
    <Satellite>
      <svg width="43" height="43" viewBox="0 0 43 43">
        <defs>
          <filter id="terrain" x="0" y="0" width="100%" height="100%">
            <feTurbulence type="fractalNoise" baseFrequency="0.35" numOctaves="3" seed="4" />
            <feColorMatrix values="0 0 0 0 .75  0 0 0 0 .7  0 0 0 0 .6  1.600 0 0 0 -.62" />
          </filter>
        </defs>
        <rect width="43" height="43" fill="#6f6552" />
        <path d="M0 0H43V20L30 16 20 12 10 11 0 14z" fill="#3b4a35" />
        <path d="M14 3 28 8 43 5V17L32 13 22 12z" fill="#1f3524" />
        <path d="M43 24 36 34 43 43z" fill="#3a4032" />
        <rect width="43" height="43" filter="url(#terrain)" opacity=".5" />
      </svg>
    </Satellite>
    <Zoomer>
      <ZoomKey><svg width="19" height="19" viewBox="0 0 19 19"><path d="M9.500 0v19M0 9.500h19" stroke="#9a9a9a" strokeWidth="2.4" /></svg></ZoomKey>
      <ZoomKey><svg width="19" height="19" viewBox="0 0 19 19"><path d="M0 9.500h19" stroke="#9a9a9a" strokeWidth="2.4" /></svg></ZoomKey>
    </Zoomer>
    <Attribution>
      <Credits $w={110}>Keyboard shortcuts</Credits>
      <Credits $w={97}>Map data ©2025</Credits>
      <Credits $w={44}>Terms</Credits>
      <Credits $w={105}>Report a map error</Credits>
    </Attribution>
  </MapFrame>
);

const Website = () => (
  <Viewport>
    <Page>
      <OrderButton>ORDER DISINI</OrderButton>
      <Heading>Kontak Kami</Heading>
      <ContactRow>
        <EmbeddedMap />
        <Info>
          <InfoTitle>Informasi Kontak</InfoTitle>
          <InfoLine $ls={-0.35} $bold>OLAHAN PEDAS</InfoLine>
          <InfoLine $ls={0}>Email: <a>olahanpedas@gmail.com</a></InfoLine>
          <InfoLine $ls={-0.5}>No HP: 082124242247</InfoLine>
          <InfoLine $ls={0.18}>Alamat: Jl. Kenangan Mantan No.5, Bandung, Jawa Barat</InfoLine>
          <InfoLine $ls={0.13}>Gofood : Olahan Pedas 2</InfoLine>
          <InfoLine $ls={0.2}>Shoopefood : Olahan Pedas</InfoLine>
        </Info>
      </ContactRow>
      <Socials>
        <svg width="27" height="27" viewBox="0 0 24 24" {...stroke('#fff')}><rect x="2" y="2" width="20" height="20" rx="5" /><path d="M16 11.370A4 4 0 1 1 12.630 8 4 4 0 0 1 16 11.370zM17.500 6.500h.01" /></svg>
        <svg width="27" height="27" viewBox="0 0 24 24" {...stroke('#fff')}><path d="M23 3a10.900 10.900 0 0 1-3.140 1.530 4.480 4.480 0 0 0-7.860 3v1A10.660 10.660 0 0 1 3 4s-4 9 5 13a11.640 11.640 0 0 1-7 2c9 5 20 0 20-11.500a4.500 4.500 0 0 0-.08-.83A7.720 7.720 0 0 0 23 3z" /></svg>
        <svg width="27" height="27" viewBox="0 0 24 24" {...stroke('#fff')}><path d="M18 2h-3a5 5 0 0 0-5 5v3H7v4h3v8h4v-8h3l1-4h-4V7a1 1 0 0 1 1-1h3z" /></svg>
        <BiLogoTiktok size={22} />
        <BiLogoWhatsapp size={20} />
      </Socials>
      <Credit>Created by <b>nia xi rpl 30</b><span>. | © 2025.</span></Credit>
      <Navbar>
        <Logo>Olahan Pedas</Logo>
        <NavLinks>
          <NavLink $w={117} $ls={0.27}>Home</NavLink>
          <NavLink $w={113} $ls={-0.1}>Menu</NavLink>
          <NavLink $w={74} $ls={0.5}>Contact</NavLink>
        </NavLinks>
        <Cart>
          <svg width="28" height="28" viewBox="0 0 24 24" {...stroke('#fff')}><circle cx="9" cy="21" r="1" /><circle cx="20" cy="21" r="1" /><path d="M1 1h4l2.680 13.390a2 2 0 0 0 2 1.610h9.720a2 2 0 0 0 2-1.610L23 6H6" /></svg>
          0
        </Cart>
      </Navbar>
    </Page>
    <Scrollbar>
      <svg width="13" height="11" viewBox="0 0 13 11"><path d="M6.500 2 11.500 9.500h-10z" fill="#9f9f9f" stroke="#9f9f9f" strokeWidth="2" strokeLinejoin="round" /></svg>
      <Thumb />
      <svg width="13" height="11" viewBox="0 0 13 11"><path d="M6.500 9 11.500 1.500h-10z" fill="#9f9f9f" stroke="#9f9f9f" strokeWidth="2" strokeLinejoin="round" /></svg>
    </Scrollbar>
  </Viewport>
);

/* ---------- taskbar drawings ---------- */

const cloud = 'M4 12a4 4 0 0 1-.5-7.900 5 5 0 0 1 9.300-.4A4.200 4.200 0 0 1 13.500 12z';

const WeatherIcon = () => (
  <svg width="32" height="30" viewBox="0 0 32 30">
    <defs>
      <linearGradient id="moon" x1="1" y1="0" x2="0" y2="1"><stop stopColor="#fbc63e" /><stop offset="1" stopColor="#ef8a1c" /></linearGradient>
      <linearGradient id="cloud" x2="0" y2="1"><stop stopColor="#bcd2fa" /><stop offset="1" stopColor="#7ea3ea" /></linearGradient>
    </defs>
    <path d="M20.500 2C27 4.500 30 9.500 29.500 16 28.500 24 22 29 15 29 9.500 28.500 5 25 3.500 19.500 14 21 22 14 20.500 2z" fill="url(#moon)" />
    <path d={cloud} transform="translate(0 0) scale(1.05)" fill="url(#cloud)" />
    <path d={cloud} transform="translate(13 16) scale(1.02)" fill="url(#cloud)" />
  </svg>
);

const Windows = () => (
  <svg width="30" height="30" viewBox="0 0 30 30">
    <linearGradient id="win" x2="1" y2="1"><stop stopColor="#7fe6fb" /><stop offset="1" stopColor="#0a93f5" /></linearGradient>
    <path d="M1 0h13.500v14.500H0V1a1 1 0 0 1 1-1zM15.500 0H29a1 1 0 0 1 1 1v13.500H15.500zM0 15.500h14.500V30H1a1 1 0 0 1-1-1zM15.500 15.500H30V29a1 1 0 0 1-1 1H15.500z" fill="url(#win)" />
  </svg>
);

const Hill = () => (
  <svg width="62" height="32" viewBox="0 0 62 32">
    <circle cx="14.500" cy="5.500" r="5" fill="#f7c23e" />
    <path d="M1 13 8 6 20 7 28 5 36 7 44 6 52 12 58 18 61 25 54 29 42 32 28 30 12 26 1 21 5 17z" fill="#4da53f" />
    <path d="M2 14Q14 6 28 6L38 9Q24 12 8 20z" fill="#2f7f31" />
    <path d="M4 22Q20 26 40 17L42 24Q30 30 14 27z" fill="#3a8f35" />
    <g fill="none" stroke="#7cc653" strokeWidth="1.1"><path d="M3 17Q14 10 27 7M6 20Q20 18 36 11M10 23Q26 22 42 14M16 27Q32 28 44 20M51 13 57 19M50 20 59 24M47 26 54 28" /></g>
    <path d="M40 6Q50 14 47 21 44 26 42 32h3Q49 25 50.500 21 51 13 43 6z" fill="#f0c795" />
    <path d="M35 8V3h8v5z" fill="#ee9e7c" /><path d="M33 3.500 39 0l6 3.500z" fill="#4ba0a6" /><path d="M34 6h10" stroke="#4b8f96" strokeWidth="1.2" />
  </svg>
);

const TaskView = () => (
  <svg width="30" height="28" viewBox="0 0 30 28">
    <rect x="7.500" width="22.500" height="20" rx="1.500" fill="#efefef" />
    <rect y="8" width="22.500" height="20" rx="1.500" fill="#6b6969" />
    <path d="M7.500 8h15v12h-15z" fill="#a9a9a9" />
  </svg>
);

const Store = () => (
  <svg width="30" height="30" viewBox="0 0 30 30">
    <path d="M8.500 6V2.500A1.500 1.500 0 0 1 10 1h10a1.500 1.500 0 0 1 1.500 1.500V6" {...stroke('#36a9ea', 2)} />
    <path d="M1 4.500h28V26a3.500 3.500 0 0 1-3.500 3.500h-21A3.500 3.500 0 0 1 1 26z" fill="#f3f3f3" />
    <path d="M9 11.500h5.500v5.300H9z" fill="#f25022" /><path d="M15.500 11.500H21v5.300h-5.500z" fill="#7fba00" /><path d="M9 17.800h5.500v5.300H9z" fill="#00a4ef" /><path d="M15.500 17.800H21v5.300h-5.500z" fill="#ffb900" />
  </svg>
);

const Copilot = () => (
  <svg width="29" height="27" viewBox="0 0 29 27">
    <defs>
      <linearGradient id="cpA" x2="0" y2="1"><stop stopColor="#1c9df0" /><stop offset=".5" stopColor="#3cc7a0" /><stop offset="1" stopColor="#f1cf2e" /></linearGradient>
      <linearGradient id="cpB" x2="0" y2="1"><stop stopColor="#b069f3" /><stop offset=".5" stopColor="#ee5a94" /><stop offset="1" stopColor="#fb9350" /></linearGradient>
    </defs>
    <path d="M9 1h10q3 0 4 4l1 3h-6q-3 0-4 4l-2 7q-1 3-4 3H4Q0 22 1 17L4 6Q5 1 9 1z" fill="url(#cpA)" />
    <path d="M20 26H10q-3 0-4-4h4q3 0 4-3l2-7q1-5 5-5h4q4 0 3 5l-3 9q-1 5-5 5z" fill="url(#cpB)" />
    <path d="M10 1h9q3 0 4 4l1 2.500h-4Q17 7 16 4 15 1 10 1z" fill="#1b3fb8" />
    <path d="M14.500 8.500h4.500L16 18h-4z" fill="#3a1717" />
  </svg>
);

const Edge = () => (
  <svg width="30" height="30" viewBox="0 0 30 30">
    <defs>
      <linearGradient id="edA" x1="0" x2="1"><stop stopColor="#2aa6e8" /><stop offset=".6" stopColor="#35c1d8" /><stop offset="1" stopColor="#66e05a" /></linearGradient>
      <linearGradient id="edB" x2="0" y2="1"><stop stopColor="#1b86dc" /><stop offset="1" stopColor="#0a63be" /></linearGradient>
    </defs>
    <circle cx="15" cy="15" r="15" fill="url(#edB)" />
    <path d="M0 13A15 15 0 0 1 30 14c0 5-4 7.500-8 7.500-3 0-5-1-5-2s1.500-1.500 1.500-4c0-3-3-5.500-7-5.500C6 10 1.500 12 0 13z" fill="url(#edA)" />
    <path d="M11 11c-5 6-1 16 8 18 4-1 7-3.500 9-7-5 3-11 2-13-2-2-3 0-6 2-7-1-2-4-3-6-2z" fill="#134a9c" />
    <path d="M17 19.500c-1-1-.5-3 1.500-4.500 0 3-2 4 0 5.500 3 2 8 1 12-2v5.500l-3 .5c-4 1.500-8.500-1-10.500-5z" fill="#381717" />
  </svg>
);

const Explorer = () => (
  <svg width="30" height="28" viewBox="0 0 30 28">
    <path d="M0 1.500A1.500 1.500 0 0 1 1.500 0h9l3 4H28a2 2 0 0 1 2 2v5H0z" fill="#e0a112" />
    <path d="M0 7.500h10l3-3h15.500A1.500 1.500 0 0 1 30 6v18.500a1.500 1.500 0 0 1-1.500 1.500h-27A1.500 1.500 0 0 1 0 24.500z" fill="#ffd452" />
    <path d="M5 26v-4.500a3 3 0 0 1 3-3h14a3 3 0 0 1 3 3V26z" fill="#1673c9" /><path d="M10 22.500h10" {...stroke('#0b4c94', 1.8)} />
  </svg>
);

const ChromeLogo = () => (
  <svg width="30" height="30" viewBox="0 0 30 30">
    <circle cx="15" cy="15" r="15" fill="#34a853" />
    <path d="M28 7.500A15 15 0 0 1 15 30l6.500-11.200L15 7.500z" fill="#fbbc04" />
    <path d="M2 7.500A15 15 0 0 1 28 7.500H15a7.500 7.500 0 0 0-6.500 3.700L7 16z" fill="#ea4335" />
    <circle cx="15" cy="15" r="7.500" fill="#fff" /><circle cx="15" cy="15" r="5.800" fill="#4285f4" />
  </svg>
);

const VsCode = () => (
  <svg width="30" height="30" viewBox="0 0 30 30">
    <path d="M1 9.500 3 7.800q.8-.5 1.500 0L22.500 21.500V29L1 11z" fill="#2489ca" />
    <path d="M1 20.500 3 22.200q.8.500 1.500 0L22.500 8.500V1L1 19z" fill="#1070b3" />
    <path d="M22.300 0 28.500 3q1.500.8 1.500 2.300v19.400q0 1.500-1.500 2.300l-6.200 3q-1.300 0-2-1l2.200-1.500v-25L20.500 1q.6-1 1.800-1z" fill="#2aa3ec" />
  </svg>
);

const TikTokDisc = styled(Disc)`
  svg { filter: drop-shadow(-1px -1px 0 #25f4ee) drop-shadow(1px 1px 0 #fe2c55); }
`;

const Bottom = () => (
  <Taskbar>
    <Weather>
      <WeatherIcon />
      <div><p>26°C</p><p>Berawan</p></div>
    </Weather>
    <Windows />
    <SearchPill>
      <svg width="20" height="20" viewBox="0 0 20 20"><circle cx="8.500" cy="8" r="6.800" {...stroke('#f2f0f1', 1.7)} /><path d="M13.200 13.200 18.300 18.600" {...stroke('#f2f0f1', 2)} /></svg>
      <span>Search</span>
      <Hill />
    </SearchPill>
    <Apps>
      <AppButton><TaskView /></AppButton>
      <AppButton><Store /></AppButton>
      <AppButton><Copilot /></AppButton>
      <AppButton><Edge /></AppButton>
      <AppButton><Explorer /><Running /></AppButton>
      <AppButton><Disc $bg="linear-gradient(#37aee2, #1e96c8)"><FaTelegramPlane size={19} /></Disc></AppButton>
      <AppButton><TikTokDisc $bg="#000"><FaTiktok size={16} /></TikTokDisc></AppButton>
      <AppButton><FaWhatsapp size={34} color="#1fd562" /><Badge>34</Badge><Running /></AppButton>
      <AppButton><FaSpotify size={30} color="#1ed760" /><Running /></AppButton>
      <AppButton $active><ChromeLogo /><ChromeBadge><Initial $size={21}>n</Initial></ChromeBadge><Running $active /></AppButton>
      <AppButton><VsCode /><Running /></AppButton>
    </Apps>
    <Tray>
      <svg width="14" height="9" viewBox="0 0 14 9"><path d="M1 7.500 7 1.500l6 6" {...stroke('#fff', 1.8)} /></svg>
      <TrayIcons>
        <svg width="21" height="18" viewBox="0 0 21 18"><g {...stroke('#fff', 1.5)}><path d="M1 7a13.500 13.500 0 0 1 19 0M4 10a9.300 9.300 0 0 1 13 0M7 13a5 5 0 0 1 7 0" /></g><circle cx="10.500" cy="15.500" r="1.900" fill="#fff" /></svg>
        <svg width="21" height="18" viewBox="0 0 21 18"><g {...stroke('#fff', 1.4)}><path d="M1 6.500v5h3l4.500 4V2.500L4 6.500zM11.500 6q2 3 0 6M14.300 4q3.500 5 0 10" /><path d="M17 2q5 7 0 14" /></g></svg>
        <svg width="21" height="18" viewBox="0 0 21 18"><path d="M7 4.500h8.500a3 3 0 0 1 3 3v4a3 3 0 0 1-3 3h-11a3 3 0 0 1-3-3v-1" {...stroke('#fff', 1.5)} /><path d="M7.500 6.500h7.500a1.500 1.500 0 0 1 1.500 1.500v3a1.500 1.500 0 0 1-1.500 1.500H4.500z" fill="#fff" /><path d="M19.300 7v5c1.300 0 1.700-1 1.700-2.500s-.4-2.500-1.700-2.500zM4.500 0 1 6.500h2.200L2.500 11 7 4.500H4.700L6.500 0z" fill="#fff" /></svg>
      </TrayIcons>
      <Clock><div>9:26 PM</div><div>5/21/2025</div></Clock>
      <svg width="20" height="20" viewBox="0 0 20 20"><path d="M2.500 14V8a6.500 6.500 0 0 1 8.500-6.200V5h4.500v3V14l1.500 2.500H1z" fill="#fff" /><path d="M6.500 18a2.500 2.500 0 0 0 5 0z" fill="#fff" /><path d="M5 8h4l-4 4.500h4M10.500 7h2.500l-2.500 3.500h2.500" {...stroke('#2a2022', 1.2)} /><path d="M13 1.500h4.500L13 6.200h4.500" {...stroke('#fff', 1.4)} /></svg>
    </Tray>
  </Taskbar>
);

const App = () => (
  <Screen>
    <Global />
    <Chrome />
    <Website />
    <Bottom />
  </Screen>
);

export default App;
